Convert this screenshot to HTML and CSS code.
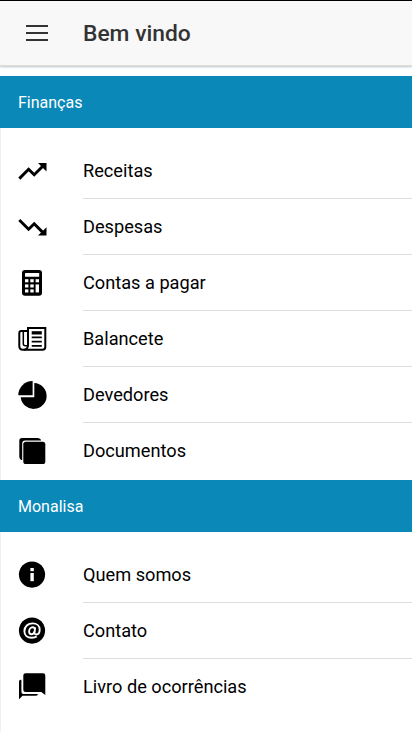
FILE: index.html
```html
<!DOCTYPE html>
<html lang="pt-BR">
<head>
    <meta charset="UTF-8">
    <meta name="viewport" content="width=device-width, initial-scale=1.0">
    <title>Bem vindo</title>
    <link rel="stylesheet" href="styles.css">
</head>
<body>
    <header class="toolbar">
        <div class="menu-button">
            <span></span>
            <span></span>
            <span></span>
        </div>
        <h1>Bem vindo</h1>
    </header>

    <main>
        <h2 class="section-title">Finanças</h2>
        <ul class="list">
            <li class="item">
                <svg class="icon" viewBox="0 0 28 28">
                    <path d="M1.3 21.6L10.6 12.3L16.2 17.8L25 9" fill="none" stroke="#000" stroke-width="2.9"/>
                    <path d="M20 6H28.5V14.4Z"/>
                </svg>
                <span class="label">Receitas</span>
            </li>
            <li class="item">
                <svg class="icon" viewBox="0 0 28 28">
                    <path d="M1.3 7L10.6 16.3L16.2 10.8L25 19.6" fill="none" stroke="#000" stroke-width="2.9"/>
                    <path d="M20 22.6H28.5V14.2Z"/>
                </svg>
                <span class="label">Despesas</span>
            </li>
            <li class="item">
                <svg class="icon" viewBox="0 0 28 28">
                    <rect x="4" y="1" width="20" height="25.7" rx="3"/>
                    <g fill="#fff">
                        <rect x="7" y="4" width="14.2" height="3.7" rx=".5"/>
                        <rect x="7" y="10.2" width="3.4" height="3.1"/>
                        <rect x="12.3" y="10.2" width="3.4" height="3.1"/>
                        <rect x="17.6" y="10.2" width="3.4" height="3.1"/>
                        <rect x="7" y="15.4" width="3.4" height="3.1"/>
                        <rect x="12.3" y="15.4" width="3.4" height="3.1"/>
                        <rect x="17.6" y="15.4" width="3.4" height="8"/>
                        <rect x="7" y="20.4" width="3.4" height="3.1"/>
                        <rect x="12.3" y="20.4" width="3.4" height="3.1"/>
                    </g>
                </svg>
                <span class="label">Contas a pagar</span>
            </li>
            <li class="item">
                <svg class="icon" viewBox="0 0 28 28">
                    <g fill="none" stroke="#000" stroke-width="2">
                        <path d="M10 20.5V2.9H27.3V22Q27.3 24.8 24.5 24.8H4.8Q1.3 24.8 1.3 21V8Q1.3 6 3.3 6H9.5"/>
                        <path d="M5.3 6.5V18.8Q5.3 20.8 7.5 20.8H9.8" stroke-width="1.5"/>
                        <path d="M10 20Q10 24.3 6 24.8"/>
                        <path d="M13.7 12.4H23.8M13.7 16.6H23.8M13.7 20.8H23.8" stroke-width="1.8"/>
                    </g>
                    <rect x="13.7" y="6.2" width="10.1" height="3.3"/>
                </svg>
                <span class="label">Balancete</span>
            </li>
            <li class="item">
                <svg class="icon" viewBox="0 0 28 28">
                    <path d="M16.3 1.9A13 13 0 1 1 2.7 16.2H16.3Z"/>
                    <path d="M14.6 0V14.3H.3A14.2 14.2 0 0 1 14.6 0Z"/>
                </svg>
                <span class="label">Devedores</span>
            </li>
            <li class="item">
                <svg class="icon" viewBox="0 0 28 28">
                    <path d="M4.2 23.3Q1.3 22.5 1.3 19.5V3.8Q1.3 1 4.1 1H19.5Q22.5 1 23.2 3.6H7.2Q4.2 3.6 4.2 6.6Z"/>
                    <rect x="5.3" y="4.7" width="22" height="22.3" rx="2.6"/>
                </svg>
                <span class="label">Documentos</span>
            </li>
        </ul>

        <h2 class="section-title">Monalisa</h2>
        <ul class="list">
            <li class="item">
                <svg class="icon" viewBox="0 0 28 28">
                    <circle cx="14" cy="13.6" r="13.1"/>
                    <rect x="12.4" y="7" width="3.4" height="3.2" fill="#fff"/>
                    <rect x="12.4" y="12" width="3.4" height="8.2" fill="#fff"/>
                </svg>
                <span class="label">Quem somos</span>
            </li>
            <li class="item">
                <svg class="icon" viewBox="0 0 28 28">
                    <circle cx="14" cy="13.6" r="13.1"/>
                    <g fill="none" stroke="#fff" stroke-width="1.9">
                        <path d="M18.8 19.5Q16.8 20.8 13.8 20.8C9.3 20.8 6.4 18 6.4 14.2C6.4 9.5 10 6.4 14.6 6.4C18.9 6.4 21.7 9 21.7 12.5C21.7 15.8 20 17.5 18.2 17.5C16.7 17.5 16.3 16.5 16.5 15.3L17.3 10.3"/>
                        <path d="M16.9 12.3Q16.5 10.2 14.7 10.2C12.6 10.2 11.1 12.2 11.1 14.6C11.1 16.3 12 17.3 13.4 17.3C15 17.3 16.2 16.2 16.5 14.4"/>
                    </g>
                </svg>
                <span class="label">Contato</span>
            </li>
            <li class="item">
                <svg class="icon" viewBox="0 0 28 28">
                    <path d="M1 26.2V8.4Q1 6.7 2.8 6.7H3.4V18.9Q3.4 21 5.5 21H20Q19.8 22.8 18 22.8H4.5Z"/>
                    <path d="M7.6 .2H25Q27.3 .2 27.3 2.5V21.9L23.3 19H7.6Q5.3 19 5.3 16.7V2.5Q5.3 .2 7.6 .2Z"/>
                </svg>
                <span class="label">Livro de ocorrências</span>
            </li>
        </ul>
    </main>
</body>
</html>
```
FILE: styles.css
```css
* {
    box-sizing: border-box;
}
body {
    display: flex;
    flex-direction: column;
    margin: 0;
    height: 732px;
    overflow: hidden;
    font-family: Roboto, sans-serif;
    background-color: #fff;
    color: #000;
    border-top: 1px solid #000;
}
.toolbar {
    display: flex;
    align-items: center;
    flex-shrink: 0;
    height: 65px;
    padding-left: 26px;
    background-color: #f8f8f8;
    border-bottom: 1px solid #e3ddd8;
    box-shadow: 0 1px 2px rgba(70, 110, 130, 0.4);
}
.menu-button {
    display: flex;
    flex-direction: column;
    gap: 5px;
    width: 22px;
}
.menu-button span {
    height: 2px;
    background-color: #333;
}
.toolbar h1 {
    margin: 0 0 0 35px;
    font-size: 22.8px;
    font-weight: 500;
    color: #333;
}
main {
    display: flex;
    flex-direction: column;
    flex: 1;
    padding-top: 10px;
}
.section-title {
    display: flex;
    align-items: center;
    height: 52px;
    margin: 0;
    padding-left: 18px;
    background-color: #0a88b7;
    color: #fff;
    font-size: 16px;
    font-weight: 400;
}
.list {
    margin: 0;
    padding: 15px 0 1px;
    list-style: none;
    border-left: 1px solid #f0f0f0;
}
.list:last-child {
    flex: 1;
}
.item {
    display: flex;
    height: 56px;
    padding-left: 17px;
}
.icon {
    width: 28px;
    height: 28px;
    margin: 14px 37px 0 0;
    overflow: visible;
}
.label {
    flex: 1;
    line-height: 55px;
    font-size: 18.2px;
    border-bottom: 1px solid #dedede;
}
.item:last-child .label {
    border-bottom: none;
}
```
